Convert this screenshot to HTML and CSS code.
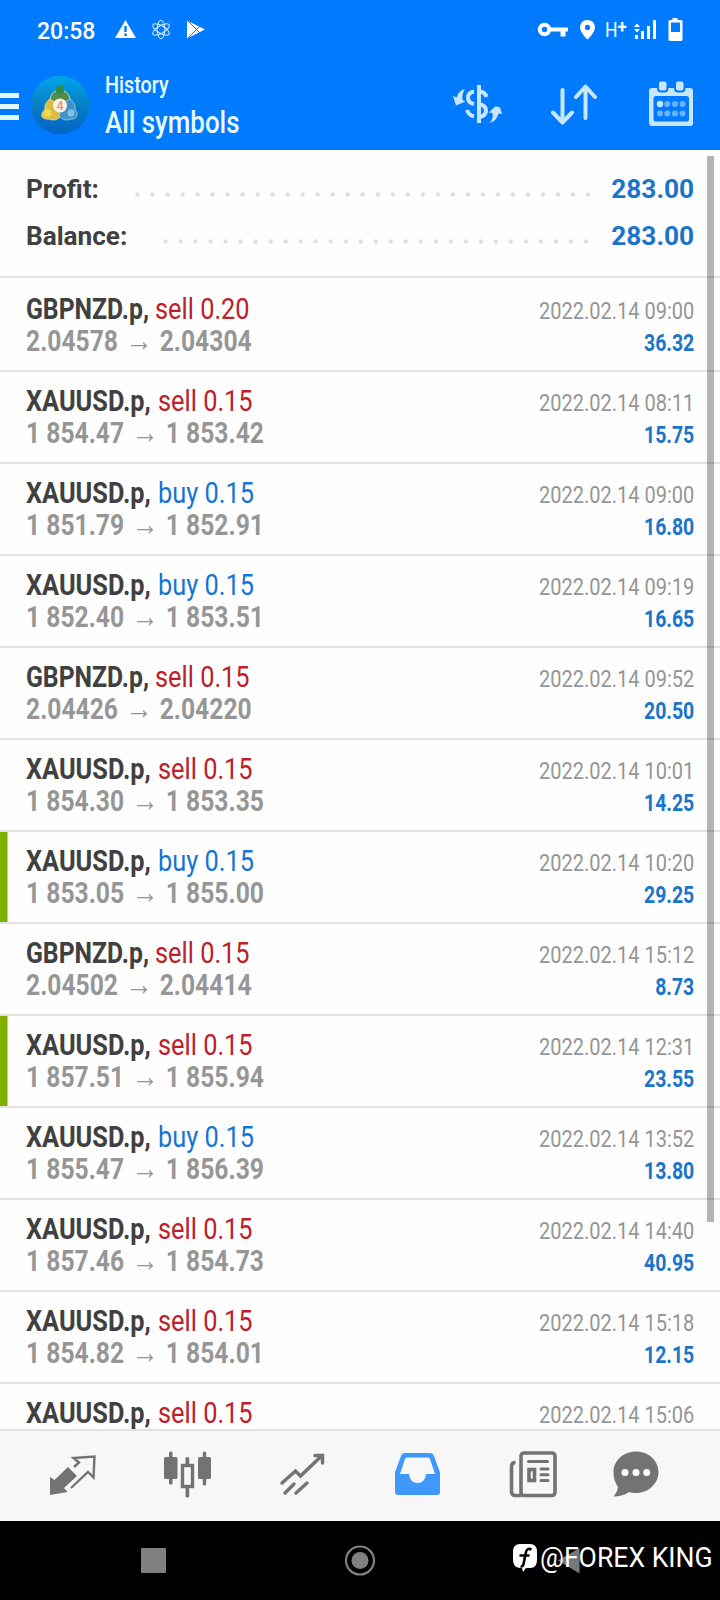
FILE: index.html
```
<!DOCTYPE html>
<html lang="en">
<head>
<meta charset="utf-8">
<title>History</title>
<link rel="stylesheet" href="styles.css">
</head>
<body>
<div class="screen">
  <div class="status">
    <span class="clock">20:58</span>
    <svg class="st-left" width="92" height="22" viewBox="114 18 92 22">
      <path fill="#fff" d="M125.500 20L136 38H115Z"/><path stroke="#007aff" stroke-width="2.400" d="M125.500 26v6M125.500 33.500v2.500"/>
      <g fill="none" stroke="#d6efff" stroke-width="1"><ellipse cx="161" cy="29.500" rx="3.800" ry="9.300"/><ellipse cx="161" cy="29.500" rx="3.800" ry="9.300" transform="rotate(60 161 29.500)"/><ellipse cx="161" cy="29.500" rx="3.800" ry="9.300" transform="rotate(-60 161 29.500)"/></g>
      <path fill="#fff" d="M187 20.500L205 29.500L187 38.500Z"/><path fill="none" stroke="#007aff" stroke-width="1" d="M188 21L201 34M188 38L201 25"/>
    </svg>
    <svg class="st-key" width="60" height="24" viewBox="537 17 60 24">
      <circle cx="544.500" cy="29.500" r="4.700" fill="none" stroke="#fff" stroke-width="4"/><path fill="#fff" d="M549 27.500h19v4h-2.500v5h-5v-5H549z"/>
      <path fill="#fff" fill-rule="evenodd" d="M587.500 20c-4.400 0-7.500 3.200-7.500 7.400 0 5.200 7.500 12.100 7.500 12.100s7.500-6.900 7.500-12.100c0-4.200-3.100-7.400-7.500-7.400zm0 4.800a2.600 2.600 0 1 1 0 5.200 2.600 2.600 0 0 1 0-5.200z"/>
    </svg>
    <span class="hplus">H<sup>+</sup></span>
    <svg class="st-sig" width="52" height="24" viewBox="633 17 52 24">
      <path fill="#fff" d="M634 27l3-3.500 3 3.500zM634 29l3 3.500 3-3.500zM635 35h3v4h-3zM641 31h3v8h-3zM647 26h3v13h-3zM653 20h3v19h-3z"/>
      <path fill="#fff" fill-rule="evenodd" d="M672.500 18h5v2h3.500q1.500 0 1.500 1.500v18q0 1.500-1.500 1.500h-11q-1.500 0-1.500-1.500v-18q0-1.500 1.500-1.500h2.500zM671 22.500v9.500h9v-9.500z"/>
    </svg>
  </div>
  <header class="bar">
    <div class="burger"><i></i><i></i><i></i></div>
    <svg class="logo" width="60" height="60" viewBox="0 0 60 60">
      <defs><linearGradient id="sky" x1="0" y1="0" x2="0" y2="1"><stop offset="0" stop-color="#00a5ea"/><stop offset=".5" stop-color="#077fc4"/><stop offset="1" stop-color="#0264c4"/></linearGradient></defs>
      <circle cx="30" cy="30" r="29.300" fill="url(#sky)"/>
      <path fill="#528c4c" stroke="#dcebbf" stroke-width=".8" d="M20 27q-.5-8 6-11l1-3h6l1 3q6.500 3 6 11v3H20z"/>
      <circle cx="30" cy="14.500" r="4" fill="#2f8b4c"/>
      <path fill="#d9bd43" stroke="#f1df8d" stroke-width=".8" d="M20 24q-6 4-5 11-4 2-3 7 3 3 7 2 7 3 12-3l-3-12z"/>
      <circle cx="17.500" cy="38" r="4" fill="#f1d94b"/>
      <path fill="#3f94c7" stroke="#9dd0e5" stroke-width=".8" d="M40 24q6 4 5 11 3 2 2 6-2 4-6 3-7 3-12-3l3-12z"/>
      <circle cx="41" cy="38" r="3.500" fill="#80c4e6"/>
      <circle cx="30" cy="30.500" r="7" fill="#f7f4ef"/><text x="30" y="35" class="four">4</text>
    </svg>
    <div class="titles"><div class="t1"><span>History</span></div><div class="t2"><span>All symbols</span></div></div>
    <svg class="ic-cur" width="52" height="44" viewBox="451 82 52 44" fill="none" stroke="#c9e6ff">
      <path stroke-width="4" d="M479 85v38"/>
      <path stroke-width="4" d="M474 91.500q-6 1-6 6.500 0 4.500 6 6M467 110q1.500 5 7 6.500M480 91.500q5 .5 6.500 5.500M480 104.500q6 1 6 6t-6 6.500"/>
      <path fill="#c9e6ff" stroke="none" d="M453 96l3.500 1.500Q459 90 465 89q-3 3.500-2.500 11l3 1.500-9.500 4zM502 114l-3.500-.5q-2 8-9 9.500 4-4 3-10l-3.500-.500 6-6q4 0 5 1z"/>
    </svg>
    <svg class="ic-sort" width="48" height="42" viewBox="550 83 48 42" fill="none" stroke="#c9e6ff" stroke-width="4" stroke-linecap="round" stroke-linejoin="round"><path d="M562.500 90v32M553 112.500l9.500 10 9.500-10M585.500 118V87M576 97l9.500-10.500L595 97"/></svg>
    <svg class="ic-cal" width="46" height="46" viewBox="648 80 46 46">
      <path fill="#c9e6ff" fill-rule="evenodd" d="M652 88h38q3 0 3 3v32q0 3-3 3h-38q-3 0-3-3V91q0-3 3-3zm4 8q-2.500 0-2.500 2.500V119q0 2.500 2.500 2.500h30.500q2.500 0 2.500-2.500V98.500q0-2.500-2.500-2.500z"/>
      <g fill="#c9e6ff" stroke="#007aff" stroke-width="2"><rect x="658" y="80.500" width="9.500" height="11" rx="3"/><rect x="675" y="80.500" width="9.500" height="11" rx="3"/></g>
      <circle cx="660" cy="104" r="3.200" fill="#c9e6ff"/>
      <g fill="#6bb2ff"><circle cx="667.300" cy="104" r="3"/><circle cx="675" cy="104" r="3"/><circle cx="682.500" cy="104" r="3"/><circle cx="660" cy="113.500" r="3"/><circle cx="667.300" cy="113.500" r="3"/><circle cx="675" cy="113.500" r="3"/><circle cx="682.500" cy="113.500" r="3"/></g>
    </svg>
  </header>
  <main class="list">
    <section class="summary">
      <div class="sum"><b>Profit:</b><i class="dots d1"></i><strong>283.00</strong></div>
      <div class="sum"><b>Balance:</b><i class="dots d2"></i><strong>283.00</strong></div>
    </section>
    <div class="row first"><div class="l"><p class="sym gbp"><b>GBPNZD.p,</b><span class="sell">sell 0.20</span></p><p class="price">2.04578<em>→</em>2.04304</p></div><div class="r"><p class="date">2022.02.14 09:00</p><p class="gain">36.32</p></div></div>
    <div class="row"><div class="l"><p class="sym"><b>XAUUSD.p,</b><span class="sell">sell 0.15</span></p><p class="price">1 854.47<em>→</em>1 853.42</p></div><div class="r"><p class="date">2022.02.14 08:11</p><p class="gain">15.75</p></div></div>
    <div class="row"><div class="l"><p class="sym"><b>XAUUSD.p,</b><span class="buy">buy 0.15</span></p><p class="price">1 851.79<em>→</em>1 852.91</p></div><div class="r"><p class="date">2022.02.14 09:00</p><p class="gain">16.80</p></div></div>
    <div class="row"><div class="l"><p class="sym"><b>XAUUSD.p,</b><span class="buy">buy 0.15</span></p><p class="price">1 852.40<em>→</em>1 853.51</p></div><div class="r"><p class="date">2022.02.14 09:19</p><p class="gain">16.65</p></div></div>
    <div class="row"><div class="l"><p class="sym gbp"><b>GBPNZD.p,</b><span class="sell">sell 0.15</span></p><p class="price">2.04426<em>→</em>2.04220</p></div><div class="r"><p class="date">2022.02.14 09:52</p><p class="gain">20.50</p></div></div>
    <div class="row"><div class="l"><p class="sym"><b>XAUUSD.p,</b><span class="sell">sell 0.15</span></p><p class="price">1 854.30<em>→</em>1 853.35</p></div><div class="r"><p class="date">2022.02.14 10:01</p><p class="gain">14.25</p></div></div>
    <div class="row tp"><div class="l"><p class="sym"><b>XAUUSD.p,</b><span class="buy">buy 0.15</span></p><p class="price">1 853.05<em>→</em>1 855.00</p></div><div class="r"><p class="date">2022.02.14 10:20</p><p class="gain">29.25</p></div></div>
    <div class="row"><div class="l"><p class="sym gbp"><b>GBPNZD.p,</b><span class="sell">sell 0.15</span></p><p class="price">2.04502<em>→</em>2.04414</p></div><div class="r"><p class="date">2022.02.14 15:12</p><p class="gain">8.73</p></div></div>
    <div class="row tp"><div class="l"><p class="sym"><b>XAUUSD.p,</b><span class="sell">sell 0.15</span></p><p class="price">1 857.51<em>→</em>1 855.94</p></div><div class="r"><p class="date">2022.02.14 12:31</p><p class="gain">23.55</p></div></div>
    <div class="row"><div class="l"><p class="sym"><b>XAUUSD.p,</b><span class="buy">buy 0.15</span></p><p class="price">1 855.47<em>→</em>1 856.39</p></div><div class="r"><p class="date">2022.02.14 13:52</p><p class="gain">13.80</p></div></div>
    <div class="row"><div class="l"><p class="sym"><b>XAUUSD.p,</b><span class="sell">sell 0.15</span></p><p class="price">1 857.46<em>→</em>1 854.73</p></div><div class="r"><p class="date">2022.02.14 14:40</p><p class="gain">40.95</p></div></div>
    <div class="row"><div class="l"><p class="sym"><b>XAUUSD.p,</b><span class="sell">sell 0.15</span></p><p class="price">1 854.82<em>→</em>1 854.01</p></div><div class="r"><p class="date">2022.02.14 15:18</p><p class="gain">12.15</p></div></div>
    <div class="row last"><div class="l"><p class="sym"><b>XAUUSD.p,</b><span class="sell">sell 0.15</span></p></div><div class="r"><p class="date">2022.02.14 15:06</p></div></div>
    <div class="scroll"></div>
  </main>
  <nav class="tabs">
    <svg width="48" height="48" viewBox="48 1450 48 48"><path fill="#737373" d="M50 1477l4.500 3 13.500-13 9 9-13 12 3.500 4-17.500 3z"/><path fill="none" stroke="#737373" stroke-width="2.400" d="M74 1467l5-4.500-5.500-4.500 21-1.500-1 21-5.500-5.500-17 16"/></svg>
    <svg width="48" height="48" viewBox="163 1450 48 48"><g fill="#737373"><rect x="164" y="1457" width="13.500" height="22" rx="1.500"/><rect x="198" y="1457" width="13" height="22" rx="1.500"/><rect x="169" y="1451.500" width="3.500" height="33" rx="1.500"/><rect x="202.700" y="1451.500" width="3.500" height="34" rx="1.500"/><rect x="185.500" y="1457" width="3.700" height="40.500" rx="1.500"/></g><rect x="182.500" y="1465.500" width="10" height="21" fill="#f7f7f7" stroke="#737373" stroke-width="3.400"/></svg>
    <svg width="48" height="48" viewBox="278 1450 48 48" fill="none" stroke="#737373" stroke-width="3.400" stroke-linecap="round"><path d="M282 1483l13.500-12 5 5 21-20M315 1455.500h7.500v7.500M285 1493l9-9M296 1493l11-10"/></svg>
    <svg width="48" height="48" viewBox="393 1450 48 48"><path fill="#3f98fb" fill-rule="evenodd" d="M405 1453h25q3 0 4 3l5.500 15q.5 1 .5 3v18q0 3-3 3h-39q-3 0-3-3v-18q0-2 .5-3l5.500-15q1-3 4-3zm2 4.500q-1.500 0-2 1.500l-5 15h9q1 9 8.500 9t8.500-9h9l-5-15q-.5-1.500-2-1.500z"/></svg>
    <svg width="48" height="48" viewBox="509 1450 48 48" fill="none" stroke="#737373" stroke-width="3.600"><rect x="521" y="1453" width="34" height="42.500" rx="3"/><path d="M515.500 1462.500q-4 0-4 4v25q0 4 4 4h6"/><path stroke-width="3" stroke-linecap="round" d="M528.500 1461.500h19M541 1469h7M541 1474.800h7M541 1480.500h7"/><rect x="529" y="1469.500" width="5.500" height="11" stroke-width="3.600"/></svg>
    <svg width="48" height="48" viewBox="612 1450 48 48"><path fill="#737373" d="M636 1451.500c12.500 0 22.500 9 22.500 20.500s-10 21-22.500 21c-2.500 0-5-.4-7-1-5 3.500-10 4.500-15.500 4.500 2.500-3 4-6 4.500-9.500-3-4-4.500-9-4.500-15 0-11.500 10-20.500 22.500-20.500z"/><g fill="#fff"><circle cx="625" cy="1472.500" r="3.500"/><circle cx="636" cy="1472.500" r="3.500"/><circle cx="646.700" cy="1472.500" r="3.500"/></g></svg>
  </nav>
  <footer class="sys">
    <svg width="440" height="32" viewBox="140 1544 440 32"><rect x="141" y="1548" width="25" height="25" rx="1" fill="#808080"/><circle cx="360" cy="1560.500" r="14" fill="none" stroke="#808080" stroke-width="2.200"/><circle cx="360" cy="1560.500" r="8.500" fill="#808080"/><path fill="#777" d="M558 1560.500L579.500 1548v25.500z"/></svg>
    <div class="mark">
      <svg width="26" height="30" viewBox="0 0 26 30"><path fill="#fff" d="M8 1h10q7 0 7 8v8q0 7-6 8l-5 0-3 4-1-4H8q-7-1-7-8V9q0-8 7-8z"/><path fill="none" stroke="#000" stroke-width="2.600" d="M19.500 6.500q-4.500-2-5.500 2.500L11.500 21q-.5 3-3 2.500M7.500 12.500h10"/></svg>
      <span>@FOREX KING</span>
    </div>
  </footer>
</div>
</body>
</html>
```
FILE: styles.css
```
* { box-sizing: border-box; }
body { margin: 0; font-family: Roboto, "Liberation Sans", sans-serif; background: #fff; }
p { margin: 0; white-space: nowrap; }
svg { display: block; flex: none; }
.screen { width: 720px; height: 1600px; display: flex; flex-direction: column; overflow: hidden; }
.status { height: 60px; background: #007aff; display: flex; align-items: flex-start; color: #fff; flex: none; }
.clock { margin: 18px 0 0 37px; width: 77px; font-size: 23px; line-height: 28px; font-weight: 500; }
.st-left { margin-top: 18px; }
.st-key { margin: 17px 0 0 331px; }
.hplus { margin: 18px 0 0 8px; width: 28px; font-size: 20px; line-height: 24px; transform: scaleX(.88); transform-origin: left; white-space: nowrap; }
.hplus sup { font-size: 19px; line-height: 0; font-weight: 700; vertical-align: 4px; }
.st-sig { margin-top: 17px; }
.bar { height: 90px; background: #007aff; display: flex; align-items: flex-start; flex: none; color: #e8fbff; }
.burger { width: 19px; margin-top: 33px; display: grid; gap: 6px; flex: none; }
.burger i { height: 5px; background: #e0faff; }
.logo { margin: 15px 0 0 11px; }
.four { font: 700 12px "Liberation Sans", sans-serif; fill: #f3965a; text-anchor: middle; }
.titles { margin: 11px 0 0 15px; width: 347px; white-space: nowrap; }
.titles span { display: inline-block; transform-origin: left; font-weight: 500; }
.t1 { font-size: 23.500px; line-height: 29px; }
.t1 span { transform: scaleX(.84); }
.t2 { font-size: 31px; line-height: 38px; padding-top: 4px; }
.t2 span { transform: scaleX(.835); }
.ic-cur { margin: 22px 0 0 -1px; }
.ic-sort { margin: 23px 0 0 47px; }
.ic-cal { margin: 20px 0 0 50px; }
.list { height: 1279px; position: relative; overflow: hidden; flex: none; background: #fefefe; }
.summary { height: 128px; padding: 16px 26px 0; border-bottom: 2px solid #e2e2e2; }
.sum { height: 47px; display: flex; align-items: center; font-size: 26px; line-height: 47px; color: #404040; }
.sum b { font-weight: 700; width: 106px; transform: scaleX(1.005); transform-origin: left; white-space: nowrap; }
.sum strong { margin-left: auto; color: #1b74cb; font-weight: 700; transform: scaleX(1.01); transform-origin: right; }
.dots { height: 5px; margin-top: 10px; background: radial-gradient(circle at 7.500px 2.500px, #dedede 1.800px, transparent 2.500px) 0 0 / 15.020px 5px repeat-x; }
.d1 { width: 465px; margin-left: -2px; }
.d2 { width: 435px; margin-left: 26px; }
.row { height: 92px; display: flex; justify-content: space-between; padding: 13px 26px 0; border-bottom: 2px solid #e2e2e2; }
.row.first { height: 94px; padding-top: 15px; }
.row.tp { background: linear-gradient(#7fb000, #7fb000) 0 0 / 7.500px 100% no-repeat; }
.row.last { border: 0; }
.sym { display: flex; font-size: 30px; line-height: 32px; color: #404040; }
.sym b { width: 132px; transform: scaleX(.845); transform-origin: left; }
.sym.gbp b { width: 129px; transform: scaleX(.825); }
.sym span { transform: scaleX(.845); transform-origin: left; }
.sell { color: #bd2028; }
.buy { color: #1475d4; }
.price { padding-top: 1px; font-size: 29px; line-height: 31px; font-weight: 700; color: #969696; transform: scaleX(.85); transform-origin: left; }
.price em { display: inline-block; width: 49px; text-align: center; font: 400 32px/20px "Liberation Sans", sans-serif; }
.r { padding-top: 2px; text-align: right; }
.r p { transform-origin: right; transform: scaleX(.833); font-size: 24px; }
.date { line-height: 32px; color: #959595; }
.r .gain { padding-top: 1px; line-height: 31px; font-weight: 700; color: #1b74cb; transform: scaleX(.81); }
.scroll { position: absolute; left: 707px; top: 6px; width: 7px; height: 1066px; background: rgba(0,0,0,.29); }
.tabs { height: 92px; background: #f7f7f7; border-top: 2px solid #e2e2e2; padding: 19px 0 0 48px; display: flex; gap: 67px; flex: none; }
.tabs svg:nth-child(5) { margin-left: 1px; }
.tabs svg:nth-child(6) { margin-left: -12px; }
.sys { height: 79px; background: #000; position: relative; padding: 23px 0 0 140px; flex: none; }
.mark { position: absolute; left: 512px; top: 22px; display: flex; color: #fff; }
.mark span { font-size: 28px; line-height: 30px; margin-left: 2px; transform: scaleX(.95); transform-origin: left; white-space: nowrap; }
```
